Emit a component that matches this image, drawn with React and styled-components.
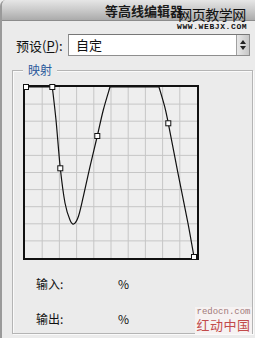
import React from "react";
import styled, { createGlobalStyle } from "styled-components";

const GlobalStyle = createGlobalStyle`
  body {
    margin: 0;
    background: #ececec;
    font-family: "Noto Sans CJK SC", "Liberation Sans", sans-serif;
  }
`;

const Window = styled.div`
  position: relative;
  width: 253px;
  height: 338px;
  background: #ebebeb;
  border-left: 2px solid #9a9a9a;
  border-top-left-radius: 6px;
  overflow: hidden;
`;

const TitleBar = styled.div`
  height: 21px;
  box-sizing: border-box;
  padding-left: 103px;
  background: linear-gradient(#e6e6e6, #cacaca 50%, #ababab);
  border-bottom: 1px solid #8c8c8c;
  font-size: 13px;
  font-weight: bold;
  line-height: 21px;
  color: #1a1a1a;
`;

const Stamp = styled.div`
  position: absolute;
  left: 175px;
  top: 6px;
  display: flex;
  flex-direction: column;
  align-items: center;
`;

const StampTitle = styled.div`
  font-size: 14px;
  line-height: 16px;
  color: #111;
  letter-spacing: -0.5px;
`;

const StampUrl = styled.div`
  font-family: "Liberation Mono", monospace;
  font-weight: bold;
  font-size: 8px;
  line-height: 9px;
  letter-spacing: 0.6px;
  color: #111;
`;

const PresetRow = styled.div`
  display: flex;
  align-items: center;
  margin-top: 13px;
  padding-left: 14px;
  height: 22px;
`;

const Label = styled.span`
  width: 52px;
  font-size: 13px;
  color: #111;
`;

const Underline = styled.span`
  text-decoration: underline;
`;

const Select = styled.div`
  display: flex;
  width: 182px;
  height: 22px;
  box-sizing: border-box;
  border: 1px solid #8e8e8e;
  border-top-color: #777;
  background: #fff;
`;

const SelectText = styled.div`
  flex: 1;
  padding-left: 7px;
  font-size: 13px;
  line-height: 20px;
  color: #111;
`;

const Spinner = styled.div`
  width: 12px;
  display: flex;
  flex-direction: column;
  align-items: center;
  justify-content: center;
  gap: 2px;
  background: linear-gradient(90deg, #e8e8e8, #c6c6c6);
  border-left: 1px solid #a0a0a0;
`;

const Arrow = styled.div`
  width: 0;
  height: 0;
  border-left: 3px solid transparent;
  border-right: 3px solid transparent;
  ${(p) =>
    p.$up ? "border-bottom: 4px solid #222;" : "border-top: 4px solid #222;"}
`;

const Group = styled.div`
  position: relative;
  margin: 14px 2px 0 10px;
  height: 264px;
  box-sizing: border-box;
  border: 1px solid #b4b4b4;
  box-shadow: inset 1px 1px 0 #fafafa, 1px 1px 0 #fafafa;
  padding: 13px 0 0 9px;
`;

const Legend = styled.div`
  position: absolute;
  left: 10px;
  top: -9px;
  padding: 0 5px;
  background: #ebebeb;
  font-size: 12px;
  line-height: 16px;
  color: #2b5a9c;
`;

const Graph = styled.svg`
  display: block;
`;

const Info = styled.div`
  display: flex;
  flex-direction: column;
  gap: 15px;
  margin-top: 11px;
  padding-left: 14px;
`;

const InfoRow = styled.div`
  display: flex;
  align-items: center;
  height: 20px;
  font-size: 12px;
  color: #111;
`;

const InfoLabel = styled.span`
  width: 82px;
`;

const Mark = styled.div`
  position: absolute;
  left: 193px;
  top: 307px;
  width: 57px;
  height: 27px;
  background: #f6f2f2;
  display: flex;
  flex-direction: column;
  align-items: center;
`;

const MarkUrl = styled.div`
  font-family: "Liberation Mono", monospace;
  font-size: 9px;
  line-height: 11px;
  color: #a07878;
`;

const MarkName = styled.div`
  font-size: 13px;
  line-height: 14px;
  letter-spacing: 0.5px;
  color: #c24a4a;
`;

const curvePoints = [
  [52.3, 87],
  [56, 120],
  [60.3, 168.3],
  [65, 203],
  [70, 220],
  [73.7, 224],
  [78.3, 216.7],
  [83.3, 196.7],
  [90, 166.7],
  [97.3, 136],
  [103.3, 110],
  [110, 87],
];

const tailPoints = [
  [159, 87],
  [164.7, 106.7],
  [168.3, 123.3],
  [178, 173.3],
  [188, 223.3],
  [194, 257],
];

function smooth(pts) {
  let d = `M${pts[0][0]},${pts[0][1]}`;
  for (let i = 0; i < pts.length - 1; i++) {
    const p0 = pts[i - 1] || pts[i];
    const p1 = pts[i];
    const p2 = pts[i + 1];
    const p3 = pts[i + 2] || p2;
    const c1 = [p1[0] + (p2[0] - p0[0]) / 6, p1[1] + (p2[1] - p0[1]) / 6];
    const c2 = [p2[0] - (p3[0] - p1[0]) / 6, p2[1] - (p3[1] - p1[1]) / 6];
    d += ` C${c1[0]},${c1[1]} ${c2[0]},${c2[1]} ${p2[0]},${p2[1]}`;
  }
  return d;
}

const handles = [
  [26, 87],
  [52.3, 87],
  [60.3, 168.3],
  [97.3, 136],
  [168.3, 123.3],
  [194, 257],
];

function ContourGraph() {
  const lines = [];
  for (let i = 1; i < 10; i++) {
    const x = 25 + i * 17.2;
    const y = 87 + i * 17.1;
    lines.push(
      <line key={"v" + i} x1={x} y1={87} x2={x} y2={258} stroke="#c6c6c6" />,
      <line key={"h" + i} x1={25} y1={y} x2={197} y2={y} stroke="#c6c6c6" />
    );
  }
  return (
    <Graph width="178" height="178" viewBox="22 84 178 178">
      <rect x="24" y="86" width="174" height="173" fill="#eeeeee" stroke="#111" strokeWidth="2" />
      {lines}
      <g fill="none" stroke="#111" strokeWidth="1.2">
        <line x1="25" y1="87" x2="52.3" y2="87" />
        <path d={smooth(curvePoints)} />
        <line x1="110" y1="87" x2="159" y2="87" />
        <path d={smooth(tailPoints)} />
      </g>
      {handles.map(([x, y], i) => (
        <rect key={i} x={x - 2.5} y={y - 2.5} width="5" height="5" fill="#fff" stroke="#111" strokeWidth="1" />
      ))}
    </Graph>
  );
}

export default function App() {
  return (
    <>
      <GlobalStyle />
      <Window>
        <TitleBar>等高线编辑器</TitleBar>
        <Stamp>
          <StampTitle>网页教学网</StampTitle>
          <StampUrl>WWW.WEBJX.COM</StampUrl>
        </Stamp>
        <PresetRow>
          <Label>
            预设(<Underline>P</Underline>):
          </Label>
          <Select>
            <SelectText>自定</SelectText>
            <Spinner>
              <Arrow $up />
              <Arrow />
            </Spinner>
          </Select>
        </PresetRow>
        <Group>
          <Legend>映射</Legend>
          <ContourGraph />
          <Info>
            <InfoRow>
              <InfoLabel>输入:</InfoLabel>
              <span>%</span>
            </InfoRow>
            <InfoRow>
              <InfoLabel>输出:</InfoLabel>
              <span>%</span>
            </InfoRow>
          </Info>
        </Group>
        <Mark>
          <MarkUrl>redocn.com</MarkUrl>
          <MarkName>红动中国</MarkName>
        </Mark>
      </Window>
    </>
  );
}
